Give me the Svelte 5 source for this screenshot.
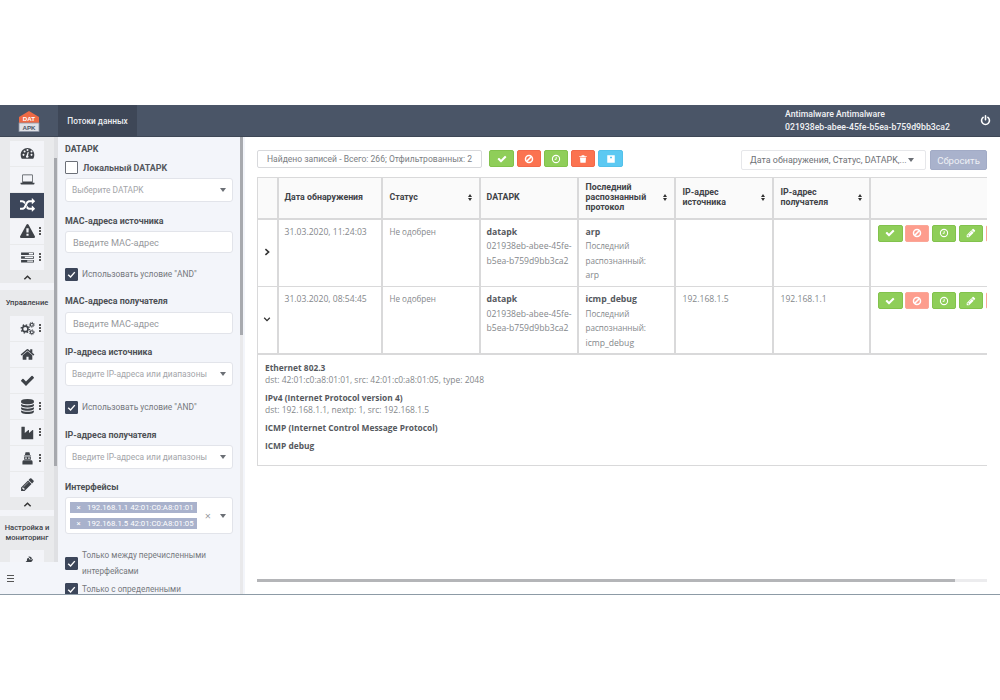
<script>
  const P = {
    check: 'M1671 566q0 40-28 68l-724 724-136 136q-28 28-68 28t-68-28l-136-136-362-362q-28-28-28-68t28-68l136-136q28-28 68-28t68 28l294 295 656-657q28-28 68-28t68 28l136 136q28 28 28 68z',
    pencil: 'M491 1536l91-91-235-235-91 91v107h128v128h107zm523-928q0-22-22-22-10 0-17 7l-542 542q-7 7-7 17 0 22 22 22 10 0 17-7l542-542q7-7 7-17zm-54-192l416 416-832 832h-416v-416zm683 96q0 53-37 90l-166 166-416-416 166-165q36-38 90-38 53 0 91 38l235 234q37 39 37 91z',
    warning: 'M1024 1375v-190q0-14-9.5-23.5t-22.5-9.5h-192q-13 0-22.5 9.5t-9.5 23.5v190q0 14 9.5 23.5t22.5 9.5h192q13 0 22.5-9.5t9.5-23.5zm-2-374l18-459q0-12-10-19-13-11-24-11h-220q-11 0-24 11-10 7-10 21l17 457q0 10 10 16.5t24 6.5h185q14 0 23.5-6.5t10.5-16.5zm-14-934l768 1408q35 63-2 126-17 29-46.5 46t-63.5 17h-1536q-34 0-63.5-17t-46.5-46q-37-63-2-126l768-1408q17-31 47-49t65-18 65 18 47 49z',
    random: 'M666 481q-60 92-137 273-22-45-37-72.5t-40.5-63.5-51-56.5-63-35-81.5-14.5h-224q-14 0-23-9t-9-23v-192q0-14 9-23t23-9h224q250 0 410 225zm1126 799q0 14-9 23l-320 320q-9 9-23 9-13 0-22.5-9.5t-9.5-22.5v-192q-32 0-85 .5t-81 1-73-1-71-5-64-10.5-63-18.5-58-28.5-59-40-55-53.5-56-69.5q59-93 136-273 22 45 37 72.5t40.5 63.5 51 56.5 63 35 81.5 14.5h256v-192q0-14 9-23t23-9q12 0 24 10l319 319q9 9 9 23zm0-896q0 14-9 23l-320 320q-9 9-23 9-13 0-22.5-9.5t-9.5-22.5v-192h-256q-48 0-87 15t-69 45-51 61.5-45 77.5q-32 62-78 171-29 66-49.5 111t-54 105-64 100-74 83-90 68.5-106.5 42-128 16.5h-224q-14 0-23-9t-9-23v-192q0-14 9-23t23-9h224q48 0 87-15t69-45 51-61.5 45-77.5q32-62 78-171 29-66 49.5-111t54-105 64-100 74-83 90-68.5 106.5-42 128-16.5h256v-192q0-14 9-23t23-9q12 0 24 10l319 319q9 9 9 23z',
    home: 'M1472 992v480q0 26-19 45t-45 19h-384v-384h-256v384h-384q-26 0-45-19t-19-45v-480q0-1 .5-3t.5-3l575-474 575 474q1 2 1 6zm223-69l-62 74q-8 9-21 11h-3q-13 0-21-7l-692-577-692 577q-12 8-24 7-13-2-21-11l-62-74q-8-10-7-23.5t11-21.5l719-599q32-26 76-26t76 26l244 204v-195q0-14 9-23t23-9h192q14 0 23 9t9 23v408l219 182q10 8 11 21.5t-7 23.5z',
    database: 'M896 768q237 0 443-43t325-127v170q0 69-103 128t-280 93.5-385 34.5-385-34.5-280-93.5-103-128v-170q119 84 325 127t443 43zm0 768q237 0 443-43t325-127v170q0 69-103 128t-280 93.5-385 34.5-385-34.5-280-93.5-103-128v-170q119 84 325 127t443 43zm0-384q237 0 443-43t325-127v170q0 69-103 128t-280 93.5-385 34.5-385-34.5-280-93.5-103-128v-170q119 84 325 127t443 43zm0-1152q208 0 385 34.5t280 93.5 103 128v128q0 69-103 128t-280 93.5-385 34.5-385-34.5-280-93.5-103-128v-128q0-69 103-128t280-93.5 385-34.5z',
    industry: 'M200 200h340q30 0 30 30v730l430-350q25-20 50-10t25 40v320l430-350q25-20 50-10t25 40v1040q0 30-30 30H200q-30 0-30-30V230q0-30 30-30z',
    power: 'M1664 896q0 156-61 298t-164 245-245 164-298 61-298-61-245-164-164-245-61-298q0-182 80.5-343t226.5-270q43-32 95.5-25t83.5 50q32 42 24.5 94.5t-49.5 84.5q-98 74-151.5 181t-53.5 228q0 104 40.5 198.5t109.5 163.5 163.5 109.5 198.5 40.5 198.5-40.5 163.5-109.5 109.5-163.5 40.5-198.5q0-121-53.5-228t-151.5-181q-42-32-49.5-84.5t24.5-94.5q31-43 84-50t95 25q146 109 226.5 270t80.5 343zm-640-768v640q0 52-38 90t-90 38-90-38-38-90v-640q0-52 38-90t90-38 90 38 38 90z',
    dash: 'M896 250C440 250 80 620 80 1080c0 170 50 320 130 450h1372c80-130 130-280 130-450 0-460-360-830-816-830zM420 1180a120 120 0 1 1 0-240 120 120 0 0 1 0 240zm130-400a120 120 0 1 1 0-240 120 120 0 0 1 0 240zm346-170a120 120 0 1 1 0-240 120 120 0 0 1 0 240zm130 640a160 160 0 1 1-250-130l150-440 120 40-90 450q70 30 70 80zm350-470a120 120 0 1 1 0-240 120 120 0 0 1 0 240zm0 400a120 120 0 1 1 0-240 120 120 0 0 1 0 240z',
    laptop: 'M330 300h1132q60 0 60 60v860q0 60-60 60H330q-60 0-60-60V360q0-60 60-60zm20 80v760h1092V380zM60 1290h1672v70q0 120-120 120H180q-120 0-120-120z',
    tasks: 'M130 300h1532v300H130zM1060 370v160h500V370zM130 740h1532v300H130zM580 810v160h980V810zM130 1180h1532v300H130zM860 1250v160h700v-160z',
    secret: 'M660 160h472l70 330H590zM470 540h852v90H470zM500 680h792v380H500zM620 780v150h200V780zM972 780v150h200V780zM420 1100h952q130 30 130 190v330H290v-330q0-160 130-190z',
    wrench: 'M1000 200c200-60 390 50 420 240l-210 130-140-80-10-170c-120 0-220 90-230 220-5 50 5 90 20 130L230 1250c-70 70-70 170-10 230s160 60 230 0l590-630c150 50 300 20 400-90 80-90 110-200 90-310l-190 130'
  };
  const railTop = [
    { i: 'dash' }, { i: 'laptop' }, { i: 'random', on: true }, { i: 'warning', k: true }, { i: 'tasks', k: true }
  ];
  const railMid = [
    { i: 'cogs', k: true }, { i: 'home' }, { i: 'check' }, { i: 'database', k: true },
    { i: 'industry', k: true }, { i: 'secret', k: true }, { i: 'pencil' }
  ];
  const cols = [
    { w: 20, t: '' },
    { w: 104, t: 'Дата обнаружения' },
    { w: 98, t: 'Статус', s: true },
    { w: 98, t: 'DATAPK' },
    { w: 97, t: 'Последний распознанный протокол', s: true },
    { w: 98, t: 'IP-адрес источника', s: true },
    { w: 97, t: 'IP-адрес получателя', s: true },
    { w: 118, t: '' }
  ];
  const rows = [
    { d: '31.03.2020, 11:24:03', p: 'arp', c: 'right', src: '', dst: '' },
    { d: '31.03.2020, 08:54:45', p: 'icmp_debug', c: 'down', src: '192.168.1.5', dst: '192.168.1.1' }
  ];
  const id = '021938eb-abee-45fe-b5ea-b759d9bb3ca2';
</script>

{#snippet icon(name, cls)}
  <svg class={cls} viewBox="0 0 1792 1792" aria-hidden="true"><path d={P[name]} fill="currentColor" fill-rule="evenodd" /></svg>
{/snippet}

{#snippet cogs()}
  <svg class="ric" viewBox="0 0 16 16" aria-hidden="true" fill="none" stroke="currentColor">
    <circle cx="5.6" cy="8.4" r="2.9" stroke-width="1.7" />
    <circle cx="5.6" cy="8.4" r="4.3" stroke-width="1.5" stroke-dasharray="1.6 1.78" />
    <circle cx="12.6" cy="4" r="1.6" stroke-width="1.2" />
    <circle cx="12.6" cy="4" r="2.6" stroke-width="1" stroke-dasharray="1 1.04" />
    <circle cx="12.6" cy="12" r="1.6" stroke-width="1.2" />
    <circle cx="12.6" cy="12" r="2.6" stroke-width="1" stroke-dasharray="1 1.04" />
  </svg>
{/snippet}

{#snippet ban()}
  <svg class="bi" viewBox="0 0 16 16" aria-hidden="true"><circle cx="8" cy="8" r="5.6" fill="none" stroke="currentColor" stroke-width="2.4" /><path d="M4.2 11.8l7.6-7.6" stroke="currentColor" stroke-width="2.4" /></svg>
{/snippet}

{#snippet clock()}
  <svg class="bi" viewBox="0 0 16 16" aria-hidden="true"><circle cx="8" cy="8" r="5.8" fill="none" stroke="currentColor" stroke-width="1.7" /><path d="M8.3 4.6v3.9H5.8" fill="none" stroke="currentColor" stroke-width="1.5" /></svg>
{/snippet}

{#snippet trash()}
  <svg class="bi" viewBox="0 0 16 16" aria-hidden="true"><path d="M6 2h4l.6 1.4H14v1.4H2V3.4h3.4zM3.2 5.6h9.6l-.6 8.4H3.8z" fill="currentColor" /></svg>
{/snippet}

{#snippet archive()}
  <svg class="bi" viewBox="0 0 16 16" aria-hidden="true"><path d="M2 2h12v12H2zM6.4 4.2v2.6h3.2V4.2z" fill="currentColor" fill-rule="evenodd" /></svg>
{/snippet}

{#snippet caret()}
  <span class="caret"></span>
{/snippet}

{#snippet chev(dir, cls)}
  <svg class={cls} viewBox="0 0 10 10" aria-hidden="true">
    {#if dir === 'up'}<path d="M1.5 7L5 3.5 8.5 7" />{:else if dir === 'right'}<path d="M3 1.5L7 5 3 8.5" />{:else}<path d="M1.5 3.5L5 7 8.5 3.5" />{/if}
  </svg>
{/snippet}

{#snippet sortIcon()}
  <span class="sort"><i class="up"></i><i class="dn"></i></span>
{/snippet}

{#snippet railItem(it)}
  <div class="ri" class:on={it.on}>
    {#if it.i === 'cogs'}{@render cogs()}{:else}{@render icon(it.i, 'ric')}{/if}
    {#if it.k}<span class="kebab"><i></i><i></i><i></i></span>{/if}
  </div>
{/snippet}

{#snippet box(on)}
  <span class="cb" class:on={on}>
    {#if on}<svg viewBox="0 0 12 12" aria-hidden="true"><path d="M2.4 6.2l2.6 2.6 4.6-5.4" fill="none" stroke="#fff" stroke-width="1.5" /></svg>{/if}
  </span>
{/snippet}

<div class="page">
  <div class="app">
    <header class="top">
      <div class="logo">
        <svg viewBox="0 0 22 21" width="22" height="21" aria-hidden="true">
          <path d="M11 0L21 6v9H1V6z" fill="#ee6a45" />
          <rect x="1" y="12" width="20" height="8.5" fill="#dfe1e6" stroke="#8b93a3" stroke-width=".8" />
          <text x="11" y="10.4" class="l1">DAT</text>
          <text x="11" y="18.6" class="l2">APK</text>
        </svg>
      </div>
      <div class="tab">Потоки данных</div>
      <div class="user">
        <div>Antimalware Antimalware</div>
        <div>{id}</div>
      </div>
      {@render icon('power', 'pw')}
    </header>

    <div class="body">
      <nav class="rail">
        <div class="railscroll">
          <div class="rsec first">
            {#each railTop as it}{@render railItem(it)}{/each}
          </div>
          <div class="fold">{@render chev('up', 'ch')}</div>
          <div class="stripe"></div>
          <div class="rlabel h1">Управление</div>
          <div class="rsec">
            {#each railMid as it}{@render railItem(it)}{/each}
          </div>
          <div class="fold">{@render chev('up', 'ch')}</div>
          <div class="stripe s2"></div>
          <div class="rlabel h2">Настройка и мониторинг</div>
          <div class="rsec"><div class="ri">{@render icon('wrench', 'ric')}</div></div>
        </div>
        <div class="rtrack"><div class="rthumb"></div></div>
        <div class="burger"><span></span><span></span><span></span></div>
      </nav>

      <aside class="filters">
        <div class="fscroll">
          <div class="lbl first">DATAPK</div>
          <label class="chk strong">{@render box(false)}<span>Локальный DATAPK</span></label>
          <div class="fld sel m3"><span>Выберите DATAPK</span>{@render caret()}</div>

          <div class="lbl g1">MAC-адреса источника</div>
          <div class="fld inp">Введите MAC-адрес</div>
          <label class="chk plain">{@render box(true)}<span>Использовать условие "AND"</span></label>

          <div class="lbl g1">MAC-адреса получателя</div>
          <div class="fld inp m5">Введите MAC-адрес</div>

          <div class="lbl g3">IP-адреса источника</div>
          <div class="fld sel"><span>Введите IP-адреса или диапазоны</span>{@render caret()}</div>
          <label class="chk plain">{@render box(true)}<span>Использовать условие "AND"</span></label>

          <div class="lbl g4">IP-адреса получателя</div>
          <div class="fld sel"><span>Введите IP-адреса или диапазоны</span>{@render caret()}</div>

          <div class="lbl g3">Интерфейсы</div>
          <div class="fld multi">
            <div class="tags">
              <span class="tag"><b>×</b>192.168.1.1 42:01:C0:A8:01:01</span>
              <span class="tag"><b>×</b>192.168.1.5 42:01:C0:A8:01:05</span>
            </div>
            <span class="clear">×</span>
            {@render caret()}
          </div>

          <label class="chk two c3">{@render box(true)}<span>Только между перечисленными интерфейсами</span></label>
          <label class="chk two c4">{@render box(true)}<span>Только с определенными</span></label>
        </div>
        <div class="ftrack"><div class="fthumb"></div></div>
      </aside>

      <main class="main">
        <div class="bar">
          <div class="count">Найдено записей - Всего: 266; Отфильтрованных: 2</div>
          <div class="btns">
            <button class="b g w25">{@render icon('check', 'bi')}</button>
            <button class="b r">{@render ban()}</button>
            <button class="b g">{@render clock()}</button>
            <button class="b r">{@render trash()}</button>
            <button class="b c w25">{@render archive()}</button>
          </div>
          <div class="sort-sel"><span>Дата обнаружения, Статус, DATAPK,...</span>{@render caret()}</div>
          <button class="reset">Сбросить</button>
        </div>

        <div class="tw">
          <table>
            <colgroup>{#each cols as c}<col style="width:{c.w}px" />{/each}</colgroup>
            <thead>
              <tr>
                {#each cols as c}
                  <th><div class="thi"><span>{c.t}</span>{#if c.s}{@render sortIcon()}{/if}</div></th>
                {/each}
              </tr>
            </thead>
            <tbody>
              {#each rows as r, i}
                <tr class:second={i === 1}>
                  <td class="ex">{@render chev(r.c, r.c === 'right' ? 'exi bold' : 'exi')}</td>
                  <td>{r.d}</td>
                  <td class="ru">Не одобрен</td>
                  <td><div class="nm">datapk</div>{id}</td>
                  <td><div class="nm">{r.p}</div><div class="ru">Последний распознанный:</div><div>{r.p}</div></td>
                  <td>{r.src}</td>
                  <td>{r.dst}</td>
                  <td class="acts">
                    <div class="rowbtns">
                      <button class="b g w25">{@render icon('check', 'bi')}</button>
                      <button class="b rp">{@render ban()}</button>
                      <button class="b g">{@render clock()}</button>
                      <button class="b g">{@render icon('pencil', 'bi')}</button>
                      <button class="b rp"></button>
                    </div>
                  </td>
                </tr>
              {/each}
              <tr class="det">
                <td colspan="8">
                  <div class="nm">Ethernet 802.3</div>
                  <div>dst: 42:01:c0:a8:01:01, src: 42:01:c0:a8:01:05, type: 2048</div>
                  <div class="nm sp">IPv4 (Internet Protocol version 4)</div>
                  <div>dst: 192.168.1.1, nextp: 1, src: 192.168.1.5</div>
                  <div class="nm sp">ICMP (Internet Control Message Protocol)</div>
                  <div class="nm sp">ICMP debug</div>
                </td>
              </tr>
            </tbody>
          </table>
        </div>

        <div class="hs"><div class="hst"></div></div>
      </main>
    </div>
  </div>
</div>

<style>
  :global(body) { margin: 0; background: #fff; }
  .page { padding-top: 105px; height: 595px; overflow: hidden; font-family: Roboto, "Liberation Sans", sans-serif; }
  .app { height: 490px; display: flex; flex-direction: column; border-bottom: 1px solid #8d9ba6; box-sizing: border-box; }

  .top { height: 32px; flex: none; display: flex; align-items: center; background: #4a5567; color: #fff; border-bottom: 1px solid #3e4756; box-sizing: border-box; }
  .logo { width: 58px; flex: none; display: flex; justify-content: center; padding-top: 1px; }
  .l1, .l2 { font-family: "Liberation Sans", sans-serif; font-size: 6.2px; font-weight: 700; text-anchor: middle; }
  .l1 { fill: #fff; }
  .l2 { fill: #4a5567; }
  .tab { width: 79px; height: 31px; background: #3e4757; font-size: 8.3px; font-weight: 500; display: flex; align-items: center; justify-content: center; color: #eceef1; }
  .user { margin-left: auto; margin-right: 30px; font-size: 8.7px; font-weight: 500; line-height: 13px; color: #f1f2f4; width: 165px; white-space: nowrap; }
  .pw { width: 11px; height: 11px; color: #fff; margin-right: 9px; }

  .body { flex: 1; min-height: 0; display: flex; }

  .rail { width: 58px; flex: none; background: #e9eaec; position: relative; overflow: hidden; }
  .railscroll { height: 100%; overflow: hidden; }
  .rsec { display: flex; flex-direction: column; }
  .rsec.first { padding-top: 4px; }
  .ri { width: 34px; height: 25px; margin: 0 0 1px 10px; background: #f3f4f8; color: #3e4248; position: relative; display: flex; align-items: center; justify-content: center; flex: none; }
  .ri.on { background: #3c465a; color: #fff; }
  .ric { width: 15px; height: 15px; }
  .kebab { position: absolute; left: 29px; top: 8px; display: flex; flex-direction: column; gap: 1px; }
  .kebab i { width: 2px; height: 2px; background: #555; display: block; }
  .fold { height: 12px; display: flex; align-items: center; justify-content: center; width: 54px; }
  .ch { width: 9px; height: 9px; }
  .ch path, .exi path { fill: none; stroke: #333; stroke-width: 1.6; }
  .exi.bold path { stroke-width: 2; }
  .stripe { height: 7px; width: 54px; background: #f3f4f8; }
  .stripe.s2 { height: 6px; }
  .rlabel { width: 54px; text-align: center; font-size: 7.6px; font-weight: 500; color: #3d4148; box-sizing: border-box; }
  .h1 { height: 26px; line-height: 26px; }
  .h2 { height: 34px; padding-top: 7px; line-height: 9.5px; }
  .rtrack { position: absolute; left: 54px; top: 0; bottom: 0; width: 4px; background: #dfe0e3; }
  .rthumb { margin-top: 21px; height: 308px; width: 3px; background: #a6a8ad; }
  .burger { position: absolute; left: 0; right: 0; bottom: 0; height: 32px; background: #f3f5fa; display: flex; flex-direction: column; gap: 2px; justify-content: center; padding-left: 7px; }
  .burger span { width: 7px; height: 1px; background: #555; }

  .filters { width: 187px; flex: none; background: #f3f5fa; position: relative; overflow: hidden; color: #4a4d52; }
  .fscroll { padding: 0 12px 0 7px; height: 100%; overflow: hidden; box-sizing: border-box; }
  .ftrack { position: absolute; left: 182px; top: 0; bottom: 0; width: 3px; background: #e9e9eb; }
  .fthumb { height: 198px; background: #a8aaaf; }
  .lbl { font-size: 8.9px; font-weight: 700; line-height: 12px; color: #4d5055; }
  .lbl.first { margin-top: 6px; }
  .g1 { margin-top: 13px; }
  .g3 { margin-top: 12px; }
  .g4 { margin-top: 14px; }
  .chk { display: flex; align-items: center; gap: 3px; font-size: 8.4px; color: #75787d; }
  .chk.strong { margin-top: 5px; height: 15px; gap: 4px; font-weight: 700; color: #55585d; font-size: 8.9px; }
  .chk.plain { margin-top: 13px; height: 16px; }
  .chk.two { line-height: 16px; font-size: 8.2px; }
  .c3 { margin-top: 13px; }
  .c4 { margin-top: 2px; }
  .cb { width: 11px; height: 11px; flex: none; background: #fff; border: 1px solid #6c7078; border-radius: 1px; display: block; margin-right: 1px; }
  .cb.on { background: #3c465a; border-color: #3c465a; }
  .cb svg { display: block; width: 100%; height: 100%; }
  .fld { background: #fff; border: 1px solid #e2e4ea; border-radius: 3px; box-sizing: border-box; width: 168px; font-size: 8.4px; color: #a3a5a9; white-space: nowrap; display: flex; align-items: center; }
  .sel { height: 24px; margin-top: 4px; padding: 0 6px 0 6px; justify-content: space-between; }
  .sel.m3 { margin-top: 3px; }
  .inp { height: 22px; margin-top: 4px; padding-left: 7px; color: #97999d; font-size: 9.2px; }
  .inp.m5 { margin-top: 5px; }
  .multi { height: 37px; margin-top: 4px; padding: 0 6px 0 4px; }
  .tags { display: flex; flex-direction: column; gap: 5px; flex: none; }
  .tag { background: #a9b2cc; color: #fff; font-size: 7.8px; height: 11px; line-height: 11px; width: 127px; box-sizing: border-box; display: flex; white-space: nowrap; overflow: hidden; }
  .tag b { width: 17px; text-align: center; font-weight: 400; flex: none; }
  .clear { margin-left: 8px; font-size: 11px; color: #8b8d91; font-weight: 300; }
  .multi .caret { margin-left: auto; }
  .caret { width: 0; height: 0; border: 3.5px solid transparent; border-top: 4px solid #6b6f75; border-bottom: 0; flex: none; }

  .main { flex: 1; min-width: 0; padding: 13px 13px 12px 12px; display: flex; flex-direction: column; background: #fff; box-sizing: border-box; }
  .bar { display: flex; align-items: flex-start; height: 27px; }
  .count { width: 225px; height: 18px; box-sizing: border-box; border: 1px solid #d8d9dc; border-radius: 2px; font-size: 8.55px; color: #7b7e83; display: flex; align-items: center; justify-content: center; white-space: nowrap; }
  .btns { display: flex; gap: 3px; margin-left: 7px; }
  .b { width: 24px; height: 17px; flex: none; border: 1px solid transparent; border-radius: 2px; padding: 0; display: flex; align-items: center; justify-content: center; color: #fff; }
  .w25 { width: 25px; }
  .b.g { background: #8fce59; border-color: #82c24c; }
  .b.r { background: #fb7350; border-color: #f2694a; }
  .b.rp { background: #fd9d8d; border-color: #fba697; }
  .b.c { background: #5cc9f2; border-color: #53c1ea; }
  .bi { width: 10px; height: 10px; }
  .sort-sel { margin-left: auto; width: 185px; height: 20px; box-sizing: border-box; border: 1px solid #e6e7ea; border-radius: 2px; font-size: 8.95px; color: #6e7176; display: flex; align-items: center; justify-content: space-between; padding: 0 11px 0 8px; white-space: nowrap; }
  .reset { width: 57px; height: 20px; margin-left: 4px; background: #a9b2cc; border: 1px solid #a2abc6; border-radius: 2px; color: #eef0f5; font-size: 9.6px; font-family: inherit; padding: 0; }

  .tw { width: 730px; overflow: hidden; box-sizing: border-box; }
  table { border-collapse: collapse; table-layout: fixed; width: 730px; font-family: "Open Sans", "Noto Sans", sans-serif; font-size: 8.6px; color: #84878b; }
  th { height: 41px; background: #fafafa; border: 1px solid #d9d9da; border-width: 1px 2px 2px 1px; padding: 0 8px 0 6px; text-align: left; font-family: Roboto, "Liberation Sans", sans-serif; font-size: 8.8px; font-weight: 700; color: #3f4247; line-height: 9.8px; box-sizing: border-box; }
  .thi { display: flex; align-items: center; justify-content: space-between; gap: 3px; }
  .sort { display: flex; flex-direction: column; gap: 1px; flex: none; }
  .sort i { display: block; width: 0; height: 0; border-left: 2.5px solid transparent; border-right: 2.5px solid transparent; }
  .sort .up { border-bottom: 3px solid #333; }
  .sort .dn { border-top: 3px solid #333; }
  td { border: 1px solid #d9d9da; border-width: 1px 2px 1px 1px; padding: 5px 2px 0 6px; vertical-align: top; line-height: 14.5px; height: 68px; box-sizing: border-box; word-wrap: break-word; }
  th:nth-child(3), th:nth-child(5), th:nth-child(6), th:nth-child(7),
  td:nth-child(3), td:nth-child(5), td:nth-child(6), td:nth-child(7) { padding-left: 7px; }
  th:nth-child(3), th:nth-child(5), th:nth-child(6), th:nth-child(7) { padding-right: 7px; }
  tr.second td { height: 67px; }
  tbody tr:not(.det) td:last-child { border-right: 0; }
  .ru { font-size: 8.1px; }
  .nm { font-weight: 700; color: #56595e; font-size: 8.7px; }
  .ex { vertical-align: middle; padding: 0; text-align: center; }
  .exi { width: 8px; height: 8px; display: inline-block; }
  .acts { padding: 5px 0 0 7px; overflow: hidden; }
  .rowbtns { display: flex; gap: 3px; width: 134px; }
  .rowbtns .b:first-child { margin-right: -1px; }
  .det td { height: 112px; border-width: 2px 0 1px 1px; padding: 7px 7px; line-height: 12px; font-size: 8.47px; border-right: 1px solid #d9d9da; }
  .det .nm { font-size: 8.4px; }
  .det .sp { margin-top: 6px; }

  .hs { margin-top: auto; height: 3px; background: #ececee; width: 730px; flex: none; }
  .hst { height: 100%; width: 698px; background: #b4b5b8; }
</style>
